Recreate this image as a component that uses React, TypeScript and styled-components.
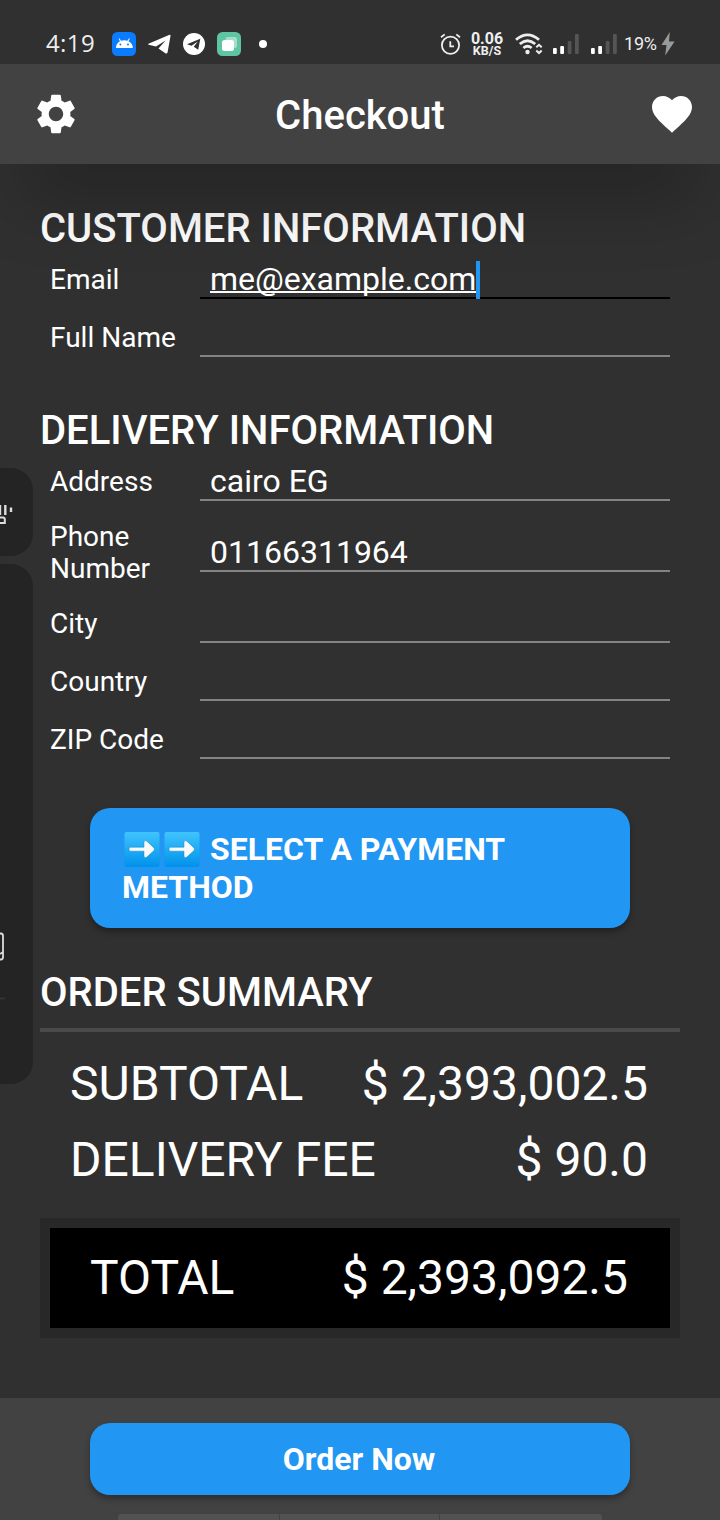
import React from 'react';
import styled, { createGlobalStyle, css } from 'styled-components';

const GlobalStyle = createGlobalStyle`
  * { box-sizing: border-box; }
  body { margin: 0; background: #303030; font-family: Roboto, sans-serif; color: #fff; }
`;

const Screen = styled.div`
  position: relative;
  display: flex;
  flex-direction: column;
  width: 720px;
  height: 1520px;
  overflow: hidden;
  background: #303030;
`;

const StatusBar = styled.div`
  display: flex;
  justify-content: space-between;
  align-items: center;
  height: 64px;
  padding: 24px 45px 0 46px;
  font-family: 'Open Sans', sans-serif;
`;

const StatusGroup = styled.div`
  display: flex;
  align-items: center;
  height: 40px;
`;

const Clock = styled.span`
  width: 66px;
  padding-bottom: 2px;
  font-size: 24px;
  line-height: 38px;
  letter-spacing: 0.4px;
  color: #eee;
`;

const Glyph = styled.svg<{ $gap?: number }>`
  display: block;
  flex: none;
  margin-left: ${(p) => p.$gap ?? 0}px;
`;

const NetSpeed = styled.div`
  display: flex;
  flex-direction: column;
  align-items: center;
  width: 34px;
  margin-left: 9px;
  font-family: Roboto, sans-serif;
  font-weight: 700;
  font-size: 12.5px;
  line-height: 12px;
  color: #eee;
`;

const SpeedValue = styled.span`
  font-size: 16px;
  line-height: 13px;
`;

const Battery = styled.span`
  margin-left: 7px;
  padding-bottom: 2px;
  width: 34px;
  white-space: nowrap;
  font-family: Roboto, sans-serif;
  font-size: 18px;
  letter-spacing: -0.2px;
  color: #eee;
`;

const AppBar = styled.header`
  position: relative;
  z-index: 1;
  display: grid;
  flex: none;
  grid-template-columns: 48px 1fr 48px;
  align-items: center;
  height: 100px;
  padding: 0 24px 0 32px;
  background: #424242;
  box-shadow: 0 53px 70px -20px rgba(0, 0, 0, 0.28);
`;

const Title = styled.h1`
  margin: 0;
  padding: 3px 8px 0 0;
  text-align: center;
  font-size: 40px;
  font-weight: 500;
  line-height: 48px;
`;

const Content = styled.main`
  display: flex;
  flex-direction: column;
  flex: 1;
  padding: 40px 40px 0;
`;

const Section = styled.section`
  display: flex;
  flex-direction: column;
  margin-bottom: 39px;
`;

const Heading = styled.h2`
  margin: 0;
  height: 47px;
  font-size: 40px;
  font-weight: 500;
  line-height: 49px;
  white-space: nowrap;
`;

const Field = styled.label<{ $tall?: boolean }>`
  display: grid;
  grid-template-columns: 150px 470px;
  align-items: center;
  height: ${(p) => (p.$tall ? 84 : 58)}px;
  padding-left: 10px;
`;

const Label = styled.span`
  font-size: 28px;
  line-height: 32px;
`;

const Value = styled.span<{ $active?: boolean }>`
  display: flex;
  align-items: center;
  height: 38px;
  padding-left: 10px;
  font-size: 32px;
  border-bottom: 2px solid #838383;
  ${(p) => p.$active && css`border-bottom-color: #000;`}
`;

const Typed = styled.span`
  text-decoration: underline;
  text-decoration-thickness: 2px;
  text-decoration-skip-ink: none;
`;

const Caret = styled.i`
  flex: none;
  align-self: flex-start;
  width: 4px;
  height: 38px;
  background: #2196f3;
`;

const Button = styled.button<{ $height: number }>`
  display: flex;
  align-items: center;
  justify-content: center;
  align-self: center;
  flex: none;
  width: 540px;
  height: ${(p) => p.$height}px;
  padding: 0 32px;
  border: 0;
  border-radius: 20px;
  background: #2196f3;
  box-shadow: 0 4px 6px rgba(0, 0, 0, 0.3);
  color: #fff;
  font-family: inherit;
  font-size: 32px;
  font-weight: 700;
  line-height: 38px;
  text-align: left;
`;

const PaymentButton = styled(Button)`
  margin: 0 0 40px;
`;

const OrderButton = styled(Button)`
  padding: 0 33px 0 31px;
`;

const ButtonText = styled.span<{ $full?: boolean }>`
  width: ${(p) => (p.$full ? '100%' : 'auto')};
`;

const ArrowIcon = styled.svg`
  display: inline-block;
  width: 40px;
  height: 38px;
  vertical-align: -8px;
`;

const Summary = styled.div`
  display: flex;
  flex-direction: column;
  margin-top: 13px;
  padding: 13px 32px 1px 30px;
  border-top: 4px solid #4a4a4a;
`;

const Line = styled.div<{ $height: number }>`
  display: flex;
  align-items: center;
  justify-content: space-between;
  height: ${(p) => p.$height}px;
  font-size: 48px;
  white-space: nowrap;
`;

const TotalBox = styled.div`
  margin-top: 20px;
  height: 120px;
  padding: 0 42px 0 40px;
  border: 10px solid #282828;
  background: #000;
`;

const Footer = styled.footer`
  display: flex;
  flex: none;
  flex-direction: column;
  align-items: center;
  justify-content: space-between;
  height: 122px;
  padding-top: 25px;
  background: #424242;
`;

const Keys = styled.div`
  display: grid;
  grid-template-columns: 161px 159px 162px;
  gap: 1px;
  width: 484px;
  height: 6px;
  border-radius: 4px 4px 0 0;
  overflow: hidden;
`;

const Key = styled.i`
  background: #525252;
`;

const EdgePanel = styled.aside<{ $top: number; $height: number }>`
  position: absolute;
  z-index: 2;
  left: 0;
  top: ${(p) => p.$top}px;
  width: 33px;
  height: ${(p) => p.$height}px;
  border-radius: 0 22px 22px 0;
  background: #242424;
`;

const Arrow = () => (
  <ArrowIcon viewBox="0 0 40 38" aria-hidden="true">
    <defs>
      <linearGradient id="tile" x1="0" y1="0" x2="0" y2="1">
        <stop offset="0" stopColor="#40c4ff" />
        <stop offset="1" stopColor="#0091ea" />
      </linearGradient>
    </defs>
    <rect x="2.5" y="2" width="35" height="35" rx="2" fill="url(#tile)" />
    <path
      d="M7.5 17.2H22V12Q22.7 9.6 24.9 11.2L32 17.9Q33 19.2 32 20.6L24.9 27.1Q22.7 28.5 22 26.3V21.2H7.5Q6.3 19.2 7.5 17.2Z"
      fill="#fafafa"
      stroke="#0288d1"
      strokeWidth=".5"
    />
  </ArrowIcon>
);

const Signal = ({ gap }: { gap: number }) => (
  <Glyph $gap={gap} width="26" height="22" viewBox="0 0 26 22" fill="#fff">
    <rect y="15" width="3.8" height="6" rx="1" />
    <rect x="7.2" y="13" width="3.8" height="8" rx="1" />
    <rect x="14.7" y="8" width="3.8" height="13" rx="1" fill="#555" />
    <rect x="22" y="1" width="3.8" height="20" rx="1" fill="#555" />
  </Glyph>
);

const Amount = ({ label, value, height }: { label: string; value: string; height: number }) => (
  <Line $height={height}>
    <span>{label}</span>
    <span>{value}</span>
  </Line>
);

export default function App() {
  return (
    <>
      <GlobalStyle />
      <Screen>
        <StatusBar>
          <StatusGroup>
            <Clock>4:19</Clock>
            <Glyph width="24" height="24" viewBox="0 0 24 24">
              <rect width="24" height="24" rx="5.5" fill="#0a7cff" />
              <path d="M4 16A8.5 7.8 0 0 1 8 9.2L6.7 6.8L7.4 6.3L9 8.8A9 9 0 0 1 15.5 8.8L17.1 6.3L17.8 6.8L16.5 9.2A8.5 7.8 0 0 1 20.8 16Z" fill="#fff" />
              <circle cx="8.4" cy="12.5" r="1" fill="#0a7cff" />
              <circle cx="16" cy="12.5" r="1" fill="#0a7cff" />
            </Glyph>
            <Glyph $gap={12} width="23" height="20" viewBox="0 0 23 20">
              <path d="M.5 10.7Q-.2 10 1 9.5L21 .9Q22.7 .3 22.5 2L19.6 18.3Q19 20.2 17.4 19.2L10.5 14.6L17.6 6.5L8 12.6Z" fill="#fff" />
            </Glyph>
            <Glyph $gap={12} width="22" height="22" viewBox="0 0 22 22">
              <circle cx="11" cy="11" r="11" fill="#fff" />
              <path d="M4 11.2L17.3 5.8L15.2 16.7L10.8 13.8L14.8 8.5L8.5 12.7Z" fill="#303030" />
            </Glyph>
            <Glyph $gap={12} width="24" height="24" viewBox="0 0 24 24">
              <rect width="24" height="24" rx="5.5" fill="#5fc4a2" />
              <rect x="8.5" y="5" width="11.5" height="11" rx="2.5" fill="#a5dfcb" />
              <rect x="5" y="8" width="12" height="11" rx="2.5" fill="#fff" />
            </Glyph>
            <Glyph $gap={18} width="8" height="8" viewBox="0 0 8 8">
              <circle cx="4" cy="4" r="4" fill="#fff" />
            </Glyph>
          </StatusGroup>
          <StatusGroup>
            <Glyph width="21" height="22" viewBox="0 0 21 22" fill="none" stroke="#eee" strokeWidth="1.8">
              <circle cx="10.5" cy="12.3" r="8.6" />
              <path d="M10.3 8.3V13.3H14M1 4.3L4.7 1.4M20 4.3L16.3 1.4" />
            </Glyph>
            <NetSpeed>
              <SpeedValue>0.06</SpeedValue>
              <span>KB/S</span>
            </NetSpeed>
            <Glyph $gap={11} width="28" height="22" viewBox="0 0 28 22" fill="none" stroke="#eee" strokeWidth="2.8">
              <path d="M1 6.8Q12.5-3 24 6.8M4.8 11Q12.5 4.4 20.2 11M8.4 15Q12.5 11.6 16.6 15" />
              <circle cx="12.5" cy="19" r="2.2" fill="#eee" stroke="none" />
              <path d="M21.3 14.3L24 11.8L26.7 14.3M21.3 17.6L24 20.1L26.7 17.6" strokeWidth="2" />
            </Glyph>
            <Signal gap={10} />
            <Signal gap={12} />
            <Battery>19%</Battery>
            <Glyph $gap={3} width="14" height="24" viewBox="0 0 14 24">
              <path d="M8.8 0L.5 13H5.5L4.2 23.5L13.6 9.5H8Z" fill="#999" />
            </Glyph>
          </StatusGroup>
        </StatusBar>

        <AppBar>
          <Glyph width="48" height="48" viewBox="0 0 24 24" fill="#fff">
            <path d="M19.14 12.94c.04-.3.06-.61.06-.94 0-.32-.02-.64-.07-.94l2.03-1.58c.18-.14.23-.41.12-.61l-1.92-3.32c-.12-.22-.37-.29-.59-.22l-2.39.96c-.5-.38-1.03-.7-1.62-.94l-.36-2.54c-.04-.24-.24-.41-.48-.41h-3.84c-.24 0-.43.17-.47.41l-.36 2.54c-.59.24-1.13.57-1.62.94l-2.39-.96c-.22-.08-.47 0-.59.22L2.74 8.87c-.12.21-.08.47.12.61l2.03 1.58c-.05.3-.09.63-.09.94s.02.64.07.94l-2.03 1.58c-.18.14-.23.41-.12.61l1.92 3.32c.12.22.37.29.59.22l2.39-.96c.5.38 1.03.7 1.62.94l.36 2.54c.05.24.24.41.48.41h3.84c.24 0 .44-.17.47-.41l.36-2.54c.59-.24 1.13-.56 1.62-.94l2.39.96c.22.08.47 0 .59-.22l1.92-3.32c.12-.22.07-.47-.12-.61l-2.01-1.58zM12 15.6c-1.98 0-3.6-1.62-3.6-3.6s1.62-3.6 3.6-3.6 3.6 1.62 3.6 3.6-1.62 3.6-3.6 3.6z" />
          </Glyph>
          <Title>Checkout</Title>
          <Glyph width="48" height="48" viewBox="0 0 24 24" fill="#fff">
            <path d="M12 21.35l-1.45-1.32C5.4 15.36 2 12.28 2 8.5 2 5.42 4.42 3 7.5 3c1.74 0 3.41.81 4.5 2.09C13.09 3.81 14.76 3 16.5 3 19.58 3 22 5.42 22 8.5c0 3.78-3.4 6.86-8.55 11.54L12 21.35z" />
          </Glyph>
        </AppBar>

        <Content>
          <Section>
            <Heading>CUSTOMER INFORMATION</Heading>
            <Field>
              <Label>Email</Label>
              <Value $active>
                <Typed>me@example.com</Typed>
                <Caret />
              </Value>
            </Field>
            <Field>
              <Label>Full Name</Label>
              <Value />
            </Field>
          </Section>

          <Section>
            <Heading>DELIVERY INFORMATION</Heading>
            <Field>
              <Label>Address</Label>
              <Value>cairo EG</Value>
            </Field>
            <Field $tall>
              <Label>Phone Number</Label>
              <Value>01166311964</Value>
            </Field>
            <Field>
              <Label>City</Label>
              <Value />
            </Field>
            <Field>
              <Label>Country</Label>
              <Value />
            </Field>
            <Field>
              <Label>ZIP Code</Label>
              <Value />
            </Field>
          </Section>

          <PaymentButton $height={120}>
            <ButtonText $full>
              <Arrow />
              <Arrow /> SELECT A PAYMENT METHOD
            </ButtonText>
          </PaymentButton>

          <Section>
            <Heading>ORDER SUMMARY</Heading>
            <Summary>
              <Amount label="SUBTOTAL" value="$ 2,393,002.5" height={76} />
              <Amount label="DELIVERY FEE" value="$ 90.0" height={76} />
            </Summary>
            <TotalBox>
              <Amount label="TOTAL" value="$ 2,393,092.5" height={98} />
            </TotalBox>
          </Section>
        </Content>

        <Footer>
          <OrderButton $height={72}>
            <ButtonText>Order Now</ButtonText>
          </OrderButton>
          <Keys>
            <Key />
            <Key />
            <Key />
          </Keys>
        </Footer>

        <EdgePanel $top={468} $height={88}>
          <Glyph width="14" height="88" viewBox="0 0 14 88" fill="none" stroke="#ddd" strokeWidth="2.4">
            <path d="M0 37V47M5.3 37V47M11 39.5V44" />
            <path d="M0 49.5H3Q4.8 49.5 4.8 51.5V55H0" strokeWidth="2" />
          </Glyph>
        </EdgePanel>
        <EdgePanel $top={564} $height={520}>
          <Glyph width="6" height="440" viewBox="0 0 6 440" fill="none" stroke="#ddd" strokeWidth="1.8">
            <path d="M0 369.5H1Q3 369.5 3 372V393Q3 395.5 1 395.5H0M0 390L3 388" />
            <path d="M0 434.5H5" stroke="#363636" />
          </Glyph>
        </EdgePanel>
      </Screen>
    </>
  );
}
